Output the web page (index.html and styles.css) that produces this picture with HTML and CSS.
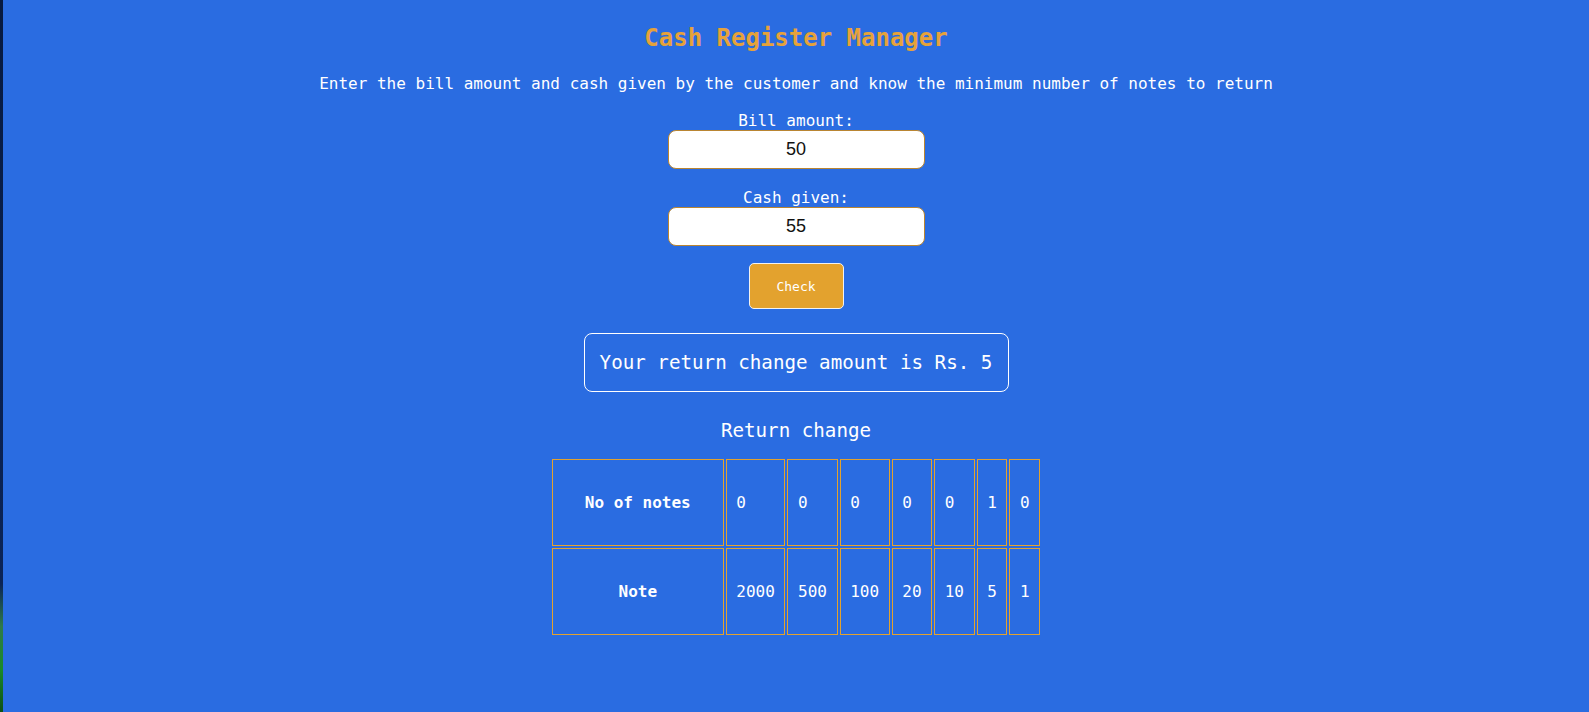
FILE: index.html
```html
<!DOCTYPE html>
<html lang="en">
<head>
<meta charset="utf-8">
<title>Cash Register Manager</title>
<link rel="stylesheet" href="styles.css">
</head>
<body>
<div class="shell">
  <div class="edge"></div>
  <main class="app">
    <h1 class="title">Cash Register Manager</h1>
    <p class="intro">Enter the bill amount and cash given by the customer and know the minimum number of notes to return</p>
    <label class="label label-first" for="bill">Bill amount:</label>
    <input class="field" id="bill" type="text" value="50">
    <label class="label label-next" for="cash">Cash given:</label>
    <input class="field" id="cash" type="text" value="55">
    <button class="check" type="button">Check</button>
    <div class="message">Your return change amount is Rs. 5</div>
    <h2 class="subhead">Return change</h2>
    <table class="notes">
      <tr>
        <th>No of notes</th>
        <td>0</td><td>0</td><td>0</td><td>0</td><td>0</td><td>1</td><td>0</td>
      </tr>
      <tr>
        <th>Note</th>
        <td>2000</td><td>500</td><td>100</td><td>20</td><td>10</td><td>5</td><td>1</td>
      </tr>
    </table>
  </main>
</div>
</body>
</html>
```

FILE: styles.css
```css
html, body {
  margin: 0;
  padding: 0;
  height: 100%;
}

body {
  background: #2a6ce1;
  font-family: "DejaVu Sans Mono", "Liberation Mono", monospace;
  color: #ffffff;
}

.shell {
  display: flex;
  min-height: 712px;
}

.edge {
  width: 3px;
  flex: 0 0 3px;
  background: linear-gradient(to bottom, #071a40 0%, #0b2457 82%, #2f7a4a 88%, #1a8a2a 94%, #0e4f14 100%);
}

.app {
  flex: 1;
  display: flex;
  flex-direction: column;
  align-items: center;
  padding-top: 23px;
}

.title {
  margin: 0;
  font-size: 24px;
  line-height: 30px;
  font-weight: bold;
  color: #e6a23a;
}

.intro {
  margin: 21px 0 0;
  font-size: 16px;
  line-height: 20px;
}

.label {
  font-size: 16px;
  line-height: 19px;
  padding-top: 2px;
}

.label-first {
  margin-top: 15px;
}

.label-next {
  margin-top: 17px;
}

.field {
  box-sizing: border-box;
  width: 257px;
  height: 39px;
  margin: 0;
  border: 1px solid #b98532;
  border-radius: 8px;
  background: #ffffff;
  font-family: "Liberation Sans", Arial, sans-serif;
  font-size: 18px;
  color: #111111;
  text-align: center;
  padding: 0 6px;
}

.check {
  box-sizing: border-box;
  margin-top: 17px;
  width: 95px;
  height: 46px;
  background: #e3a22e;
  border: 1px solid #f2f2f2;
  border-radius: 5px;
  color: #ffffff;
  font-family: "DejaVu Sans Mono", monospace;
  font-size: 13px;
  font-weight: 500;
}

.message {
  box-sizing: border-box;
  margin-top: 24px;
  height: 59px;
  width: 425px;
  display: flex;
  align-items: center;
  justify-content: center;
  border: 1px solid #ffffff;
  border-radius: 8px;
  font-size: 19.2px;
}

.subhead {
  margin: 27px 0 0;
  font-size: 19.2px;
  line-height: 24px;
  font-weight: normal;
}

.notes {
  margin-top: 14px;
  border-spacing: 2px;
}

.notes th,
.notes td {
  border: 1px solid #e3a22e;
  font-size: 16px;
  line-height: 21px;
}

.notes th {
  padding: 32px;
  font-weight: bold;
  text-align: center;
}

.notes td {
  padding: 0 9.6px;
  text-align: left;
}
```
